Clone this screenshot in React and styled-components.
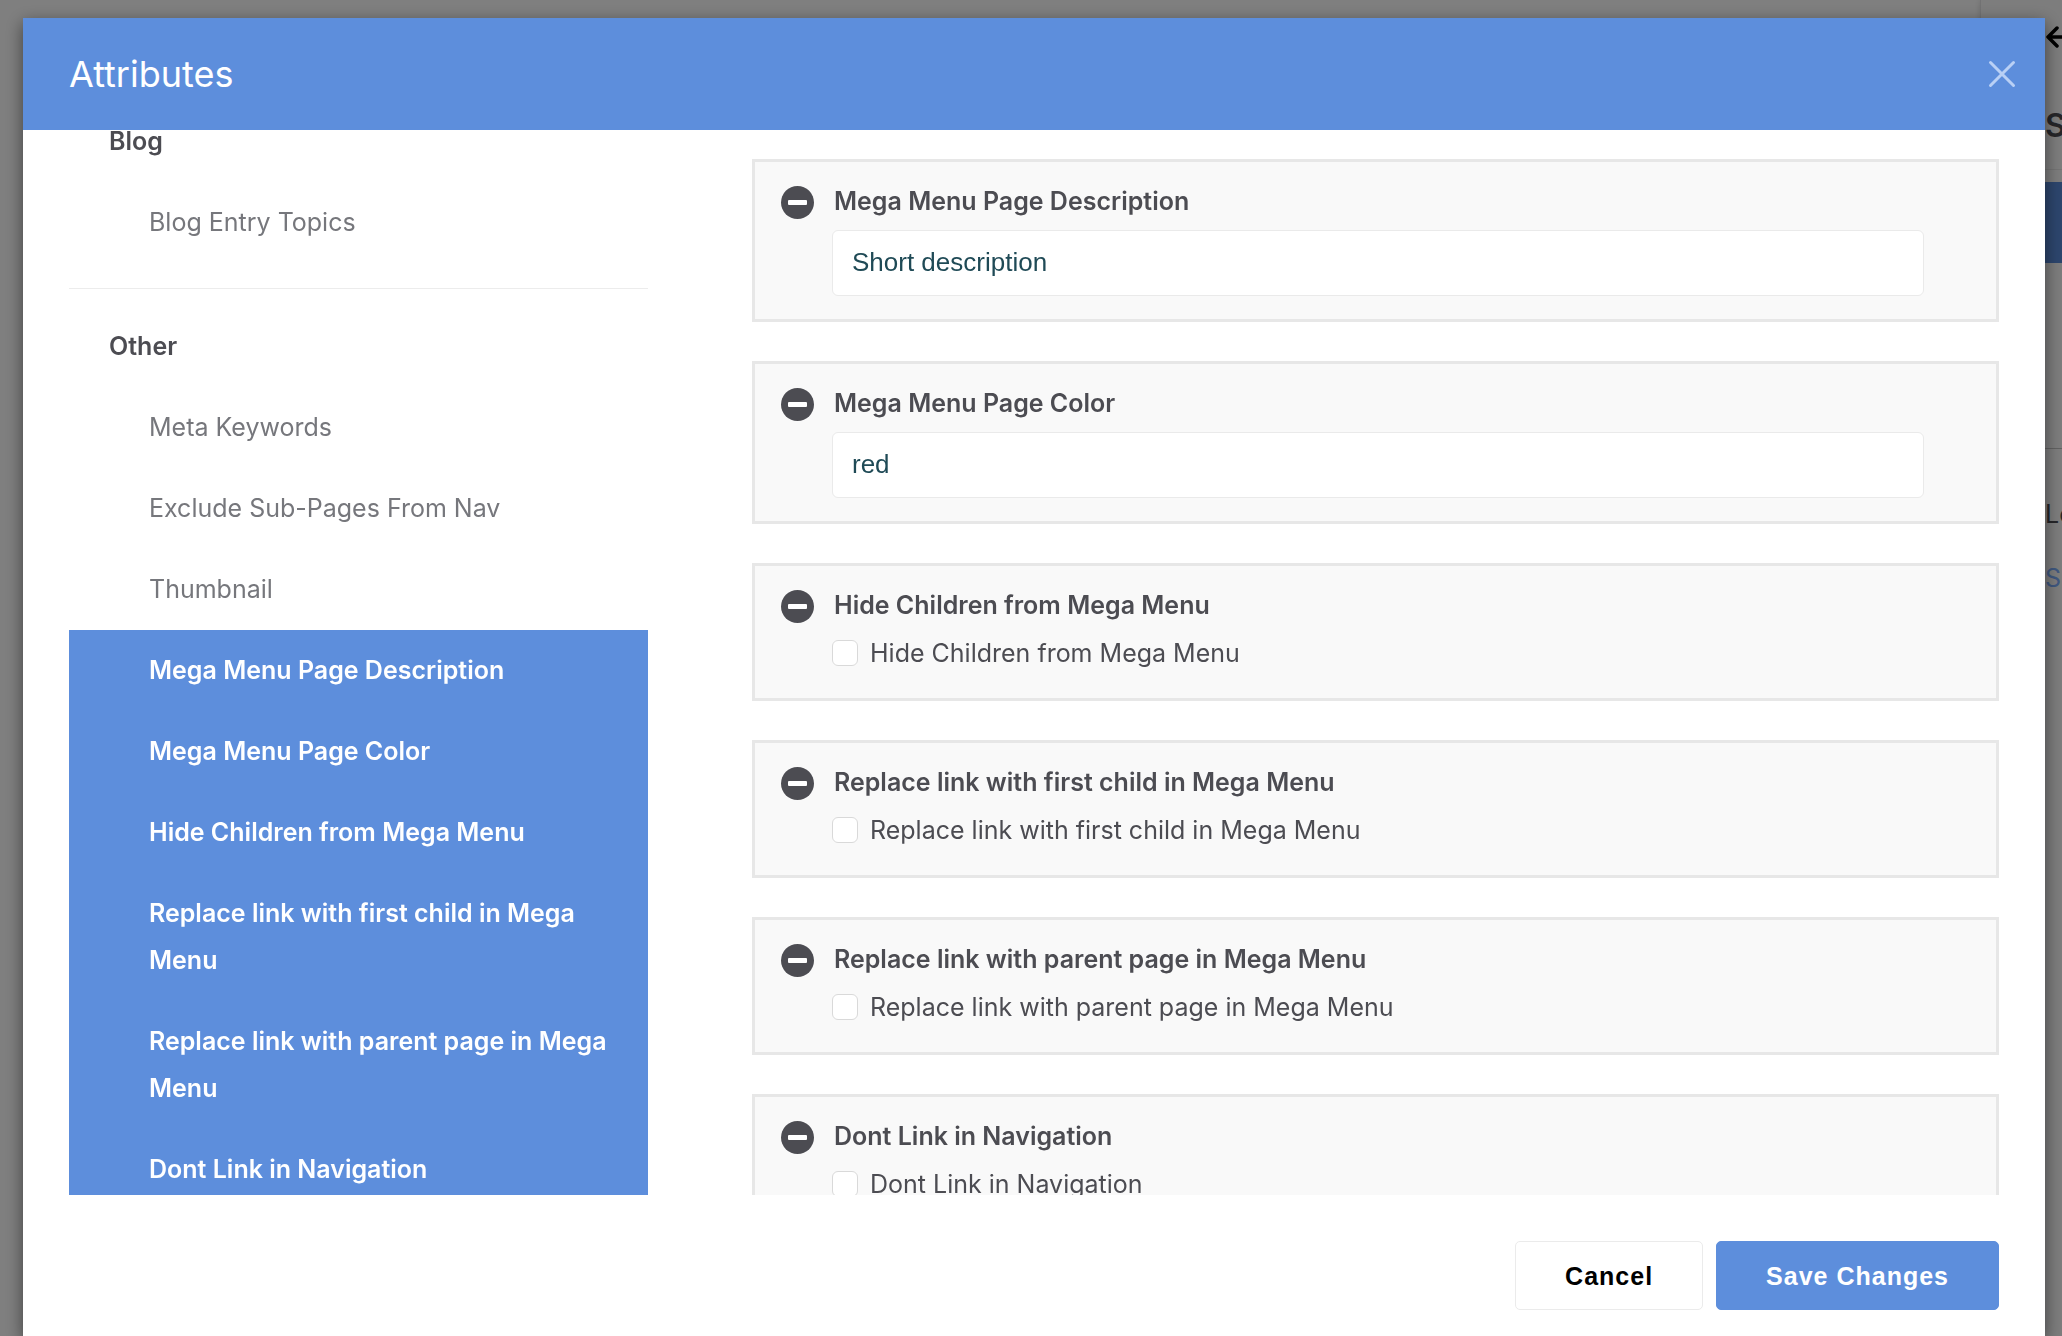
import React, { useLayoutEffect, useRef, useState } from 'react';
import styled, { createGlobalStyle } from 'styled-components';

const GlobalStyle = createGlobalStyle`
    * {
        box-sizing: border-box;
    }

    body {
        margin: 0;
        overflow: hidden;
        background: #fff;
        color: #4c4c52;
        font-family: Inter, "Liberation Sans", sans-serif;
        font-size: 25px;
    }
`;

const Page = styled.div`
    display: flex;
    justify-content: flex-end;
    height: 100vh;
`;

const PagePanel = styled.aside`
    width: 82px;
    overflow: hidden;
    white-space: nowrap;
    background: #fafafb;
    border-left: 1px solid #e4e4e6;
    box-shadow: 0 0 6px rgba(0, 0, 0, 0.15);
`;

const PanelTop = styled.header`
    height: 170px;
    padding: 22px 0 0 62px;
    border-bottom: 1px solid #e8e8e8;

    svg {
        display: block;
        width: 30px;
        height: 30px;
    }
`;

const PanelTitle = styled.h2`
    margin: 52px 0 0 2px;
    font-size: 32px;
    line-height: 44px;
    font-weight: 600;
`;

const PanelCurrent = styled.div`
    height: 81px;
    margin-top: 12px;
    background: #5a8cdb;
`;

const PanelSection = styled.section`
    margin-top: 185px;
    padding: 43px 0 0 64px;
    border-top: 1px solid #c4c4c4;
    line-height: 44px;
`;

const PanelLink = styled.a`
    display: block;
    margin-top: 20px;
    color: #7fb0ff;
    text-decoration: none;
`;

const Overlay = styled.div`
    position: fixed;
    inset: 0;
    display: flex;
    padding: 18px 17px 0 23px;
    background: rgba(0, 0, 0, 0.5);
`;

const Dialog = styled.form`
    flex: 1;
    display: flex;
    flex-direction: column;
    min-width: 0;
    background: #fff;
    box-shadow: 0 5px 16px rgba(0, 0, 0, 0.5);
`;

const DialogHeader = styled.header`
    display: flex;
    align-items: center;
    justify-content: space-between;
    height: 112px;
    padding: 0 29px 0 46px;
    background: #5d8edc;
    color: #fff;
`;

const DialogTitle = styled.h1`
    margin: 0;
    font-size: 36px;
    font-weight: 400;
`;

const PlainButton = styled.button`
    display: block;
    flex: none;
    padding: 0;
    border: 0;
    background: none;
    cursor: pointer;

    svg {
        display: block;
    }
`;

const DialogBody = styled.div`
    flex: 1;
    display: flex;
    gap: 104px;
    min-height: 0;
    padding: 0 46px;
`;

const Sidebar = styled.nav`
    width: 30%;
    overflow-y: auto;
    scrollbar-width: none;
`;

const Group = styled.section`
    & + & {
        margin-top: 25px;
        padding-top: 17px;
        border-top: 1px solid #ececec;
    }
`;

const GroupTitle = styled.h2`
    margin: 0;
    padding: 17px 40px;
    font-size: 25px;
    line-height: 47px;
    font-weight: 600;
`;

const AttributeList = styled.ul`
    margin: 0;
    padding: 0;
    list-style: none;
`;

const AttributeLink = styled.a`
    display: block;
    padding: 17px 24px 17px 80px;
    line-height: 47px;
    text-decoration: none;
    color: ${props => (props.$selected ? '#fff' : '#76777c')};
    background: ${props => (props.$selected ? '#5d8edc' : 'transparent')};
    font-weight: ${props => (props.$selected ? 600 : 400)};
`;

const Fields = styled.div`
    flex: 1;
    display: flex;
    flex-direction: column;
    gap: 39px;
    overflow-y: auto;
    scrollbar-width: none;
    padding: 29px 0;
`;

const Card = styled.div`
    flex: none;
    display: flex;
    align-items: flex-start;
    gap: 18px;
    padding: 20px 72px 23px 26px;
    border: 3px solid #e7e7e7;
    background: #f9f9f9;
`;

const RemoveButton = styled(PlainButton)`
    margin-top: 4px;
`;

const CardContent = styled.div`
    flex: 1;
`;

const FieldTitle = styled.label`
    display: block;
    margin-bottom: 10px;
    padding-left: 2px;
    line-height: 38px;
    font-weight: 600;
`;

const TextInput = styled.input`
    display: block;
    width: 100%;
    height: 66px;
    padding: 0 19px 2px;
    border: 1px solid #eaeaea;
    border-radius: 6px;
    background: #fff;
    color: #1f4a56;
    font: 26px "Liberation Sans", Arial, sans-serif;
`;

const CheckRow = styled.label`
    display: flex;
    align-items: center;
    gap: 12px;
    height: 38px;
    margin-bottom: 3px;
`;

const Checkbox = styled.input`
    appearance: none;
    width: 26px;
    height: 26px;
    margin: 0;
    border: 1px solid #d9d9d9;
    border-radius: 6px;
    background: #fff;

    &:checked {
        background: #5d8edc;
    }
`;

const DialogFooter = styled.footer`
    display: flex;
    justify-content: flex-end;
    gap: 13px;
    padding: 46px 46px 26px;
`;

const Button = styled.button`
    height: 69px;
    padding: 1px 49px 0;
    border: 1px solid ${props => (props.$primary ? '#5d8edc' : '#ebebeb')};
    border-radius: 5px;
    background: ${props => (props.$primary ? '#5d8edc' : '#fff')};
    color: ${props => (props.$primary ? '#fff' : '#000')};
    font: bold 25px "Liberation Sans", Arial, sans-serif;
    letter-spacing: 1px;
    cursor: pointer;
`;

const groups = [
    {
        title: 'Blog',
        items: ['Blog Entry Topics'],
    },
    {
        title: 'Other',
        items: [
            'Meta Keywords',
            'Exclude Sub-Pages From Nav',
            'Thumbnail',
            'Mega Menu Page Description',
            'Mega Menu Page Color',
            'Hide Children from Mega Menu',
            'Replace link with first child in Mega Menu',
            'Replace link with parent page in Mega Menu',
            'Dont Link in Navigation',
        ],
    },
];

const fields = [
    { id: 'description', label: 'Mega Menu Page Description', value: 'Short description' },
    { id: 'color', label: 'Mega Menu Page Color', value: 'red' },
    { id: 'hide-children', label: 'Hide Children from Mega Menu' },
    { id: 'first-child', label: 'Replace link with first child in Mega Menu' },
    { id: 'parent-page', label: 'Replace link with parent page in Mega Menu' },
    { id: 'dont-link', label: 'Dont Link in Navigation' },
];

const isSelected = name => fields.some(field => field.label === name);

const CloseIcon = () => (
    <svg width="28" height="28" viewBox="0 0 28 28" fill="none" stroke="#b9d0f5" strokeWidth="3" strokeLinecap="round">
        <path d="M2.5 2.5l23 23M25.5 2.5l-23 23" />
    </svg>
);

const MinusIcon = () => (
    <svg width="33" height="33" viewBox="0 0 33 33">
        <circle cx="16.5" cy="16.5" r="16.5" fill="#4c4c52" />
        <rect x="7" y="14" width="19" height="5" rx="1" fill="#fff" />
    </svg>
);

const BackIcon = () => (
    <svg viewBox="0 0 30 30" fill="none" stroke="#000" strokeWidth="3.5" strokeLinecap="round" strokeLinejoin="round">
        <path d="M29 15H5M14 6l-9 9 9 9" />
    </svg>
);

const Field = ({ id, label, value }) => (
    <Card>
        <RemoveButton type="button" aria-label={`Remove ${label}`}>
            <MinusIcon />
        </RemoveButton>
        <CardContent>
            <FieldTitle htmlFor={id}>{label}</FieldTitle>
            {value !== undefined ? (
                <TextInput id={id} type="text" defaultValue={value} />
            ) : (
                <CheckRow>
                    <Checkbox id={id} type="checkbox" />
                    {label}
                </CheckRow>
            )}
        </CardContent>
    </Card>
);

const AttributesDialog = ({ onClose }) => {

    const sidebar = useRef(null);

    useLayoutEffect(() => {
        sidebar.current.scrollTop = 29;
    }, []);

    return (
        <Overlay>
            <Dialog role="dialog" aria-label="Attributes" onSubmit={e => e.preventDefault()}>
                <DialogHeader>
                    <DialogTitle>Attributes</DialogTitle>
                    <PlainButton type="button" aria-label="Close" onClick={onClose}>
                        <CloseIcon />
                    </PlainButton>
                </DialogHeader>
                <DialogBody>
                    <Sidebar ref={sidebar}>
                        {groups.map(group => (
                            <Group key={group.title}>
                                <GroupTitle>{group.title}</GroupTitle>
                                <AttributeList>
                                    {group.items.map(item => (
                                        <li key={item}>
                                            <AttributeLink href="#" $selected={isSelected(item)}>{item}</AttributeLink>
                                        </li>
                                    ))}
                                </AttributeList>
                            </Group>
                        ))}
                    </Sidebar>
                    <Fields>
                        {fields.map(field => <Field key={field.id} {...field} />)}
                    </Fields>
                </DialogBody>
                <DialogFooter>
                    <Button type="button" onClick={onClose}>Cancel</Button>
                    <Button type="submit" $primary>Save Changes</Button>
                </DialogFooter>
            </Dialog>
        </Overlay>
    );
}

const App = () => {

    const [open, setOpen] = useState(true);

    return (
        <>
            <GlobalStyle />
            <Page>
                <PagePanel>
                    <PanelTop>
                        <BackIcon />
                        <PanelTitle>S</PanelTitle>
                    </PanelTop>
                    <PanelCurrent />
                    <PanelSection>
                        Lo
                        <PanelLink href="#">S</PanelLink>
                    </PanelSection>
                </PagePanel>
            </Page>
            {open && <AttributesDialog onClose={() => setOpen(false)} />}
        </>
    );
}

export default App;
